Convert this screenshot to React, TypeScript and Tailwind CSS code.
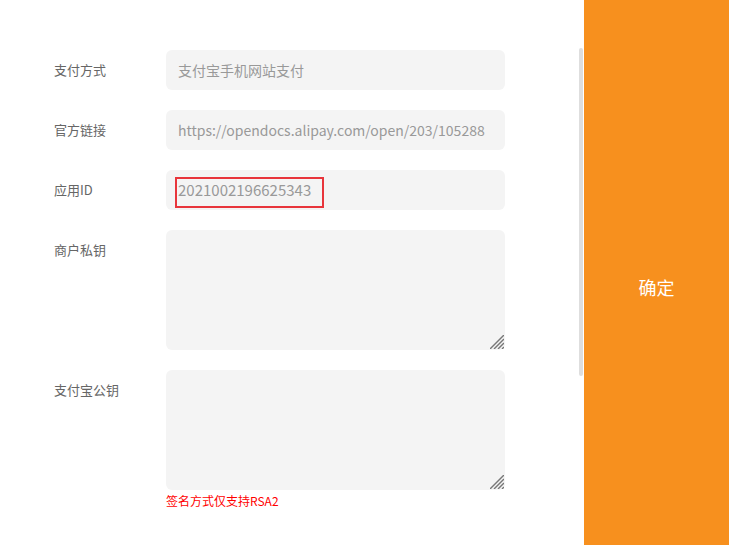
import React from "react";

const font = { fontFamily: '"Noto Sans CJK SC", "Noto Sans", sans-serif' };

function Row({ label, children, tall }: { label: string; children: React.ReactNode; tall?: boolean }) {
  return (
    <div className="flex">
      <div className={`w-[112px] shrink-0 text-[13px] text-[#666] ${tall ? "pt-[10px]" : "flex h-10 items-center"}`}>
        {label}
      </div>
      <div className="w-[339px]">{children}</div>
    </div>
  );
}

function Area() {
  return (
    <div className="relative">
      <textarea className="block h-[120px] w-full resize-none rounded-md bg-[#f4f4f4] px-3 py-2 text-sm text-[#999] outline-none" />
      <svg className="pointer-events-none absolute bottom-[1px] right-[1px]" width="14" height="14" viewBox="0 0 14 14">
        <g stroke="#777" strokeWidth="1.4">
          <line x1="14" y1="0" x2="0" y2="14" />
          <line x1="14" y1="4" x2="4" y2="14" />
          <line x1="14" y1="8" x2="8" y2="14" />
          <line x1="14" y1="12" x2="12" y2="14" />
        </g>
      </svg>
    </div>
  );
}

export default function App() {
  return (
    <div className="flex h-[545px] w-[729px] overflow-hidden bg-white" style={font}>
      <div className="flex flex-1">
        <div className="flex flex-1 flex-col gap-5 pl-[54px] pt-[50px]">
          <Row label="支付方式">
            <div className="flex h-10 items-center rounded-md bg-[#f4f4f4] px-3 text-sm text-[#999]">
              支付宝手机网站支付
            </div>
          </Row>
          <Row label="官方链接">
            <div className="flex h-10 items-center overflow-hidden whitespace-nowrap rounded-md bg-[#f4f4f4] px-3 text-sm text-[#999]">
              https://opendocs.alipay.com/open/203/105288
            </div>
          </Row>
          <Row label="应用ID">
            <div className="relative flex h-10 items-center rounded-md bg-[#f4f4f4] px-3 text-[15px] text-[#999]">
              2021002196625343
              <div className="absolute left-[9px] top-[7px] h-[31px] w-[149px] border-2 border-[#e8353b]" />
            </div>
          </Row>
          <Row label="商户私钥" tall>
            <Area />
          </Row>
          <Row label="支付宝公钥" tall>
            <Area />
            <div className="mt-[3px] text-xs text-[#f00]">签名方式仅支持RSA2</div>
          </Row>
        </div>
        <div className="mr-px w-[4px]">
          <div className="mt-[48px] h-[328px] rounded-full bg-[#dedede]" />
        </div>
      </div>
      <button className="flex w-[145px] items-center justify-center bg-[#f7901e] pt-[28px] text-lg text-white">
        确定
      </button>
    </div>
  );
}
